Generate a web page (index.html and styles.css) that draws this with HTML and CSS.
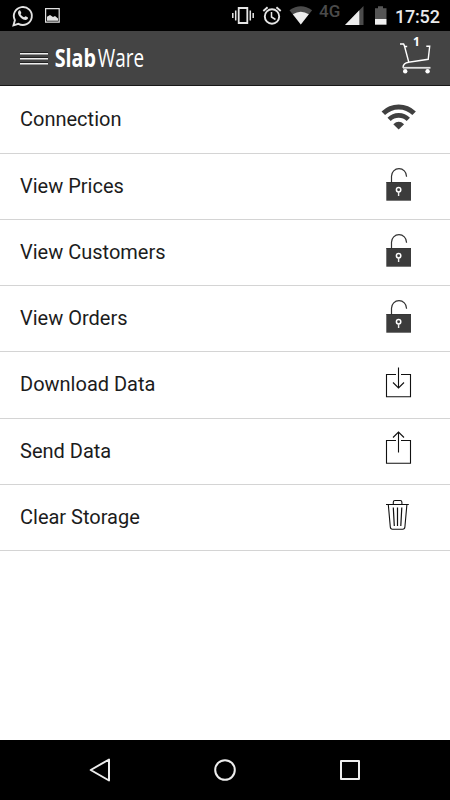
FILE: index.html
```html
<!DOCTYPE html>
<html lang="en">
<head>
<meta charset="utf-8">
<title>SlabWare</title>
<link rel="stylesheet" href="styles.css">
</head>
<body>
<div class="status">
  <svg class="status-left" width="80" height="31" viewBox="0 0 80 31" fill="none" stroke="#e2e2e2">
    <path d="M13.500 25.300l1.400-5.100A9 9 0 1 1 18.400 23.800z" stroke-width="1.900"/>
    <path d="M18.800 10.800c.7-.8 1.400-.6 1.700.1l.8 1.800c.2.6-.7 1.200-.7 1.600.7 1.400 2 2.500 3.500 3 .5 0 1-1.200 1.600-1l1.900 1c.9.5.2 1.800-.6 2.300-1.500.8-4 .1-6.200-1.900-2.400-2.200-3.700-5-2-6.900z" fill="#e2e2e2" stroke="none"/>
    <path d="M45.600 8.600h13.600v13.600H45.600z" stroke-width="1.200"/>
    <path d="M47 20.700v-4l3-1.800 3 2.200 2-1 3 2.300v2.300z" fill="#e2e2e2" stroke="none"/>
  </svg>
  <div class="status-right">
    <svg width="167" height="31" viewBox="228 0 167 31" fill="none" stroke="#e5e5e5">
      <path d="M238.700 8h8.600v15h-8.600z" stroke-width="1.800"/>
      <path d="M235.700 10.500v10M232.800 13v5M250.300 10.500v10M253.200 13v5" stroke-width="1.500"/>
      <circle cx="272" cy="16.500" r="7.200" stroke-width="1.900"/>
      <path d="M271.500 12v5l4 2.500" stroke-width="1.500"/>
      <path d="M263.300 11l4.300-3.700M280.700 11l-4.300-3.700" stroke-width="1.900"/>
      <path d="M289.500 10.300q11.300-8 22.600 0L300.800 24.500z" fill="#4b4b4b" stroke="none"/>
      <path d="M292.800 14.300q8-5.200 16 0L300.800 24.500z" fill="#ededed" stroke="none"/>
      <text class="network" x="319" y="17.200">4G</text>
      <path d="M363.500 6v19H345z" fill="#4b4b4b" stroke="none"/>
      <path d="M359.300 10.300V25H345z" fill="#ededed" stroke="none"/>
      <path d="M375 8.200h3V6.300h5v1.900h3.500V19H375z" fill="#555" stroke="none"/>
      <path d="M375 19h11.500v5.700H375z" fill="#f0f0f0" stroke="none"/>
    </svg>
    <span class="clock">17:52</span>
  </div>
</div>
<header class="header">
  <div class="brand">
    <span class="menu"><i></i><i></i><i></i></span>
    <svg width="96" height="54" viewBox="54 31 96 54" fill="#fff">
      <text class="logo-bold" transform="translate(54.700 67.300) scale(.79 1)">Slab</text>
      <text class="logo-light" transform="translate(97.800 67.300) scale(.755 1)">Ware</text>
    </svg>
  </div>
  <svg width="40" height="54" viewBox="395 31 40 54" fill="none" stroke="#fff" stroke-width="1.400">
    <path d="M400 44h3.600l1 2.500h2.600M404.200 45l4.600 17.300 19.400-3 1.500-13h-3.400M408.800 62.300c-4 .5-5.800 2.200-5.800 5.500"/>
    <path d="M403 67.800h27.500" stroke="#e0e0e0" stroke-width="1.800"/>
    <circle cx="405.200" cy="71.300" r="2.200" fill="#fff" stroke="none"/>
    <circle cx="427.600" cy="71.300" r="2.200" fill="#fff" stroke="none"/>
    <text class="count" x="413" y="46.300">1</text>
  </svg>
</header>
<main class="list">
  <div class="row"><span>Connection</span>
    <svg class="icon" viewBox="370 87 60 66" fill="none" stroke="#404040">
      <path d="M383.300 113.300a22 22 0 0 1 30.800 0" stroke-width="5"/>
      <path d="M389.100 119.400a13.500 13.500 0 0 1 19.200 0" stroke-width="4.600"/>
      <path d="M393.300 124.200q5.400-4.700 10.800 0l-5.400 5.400z" fill="#404040" stroke="none"/>
    </svg></div>
  <div class="row"><span>View Prices</span>
    <svg class="icon" viewBox="370 153 60 66" fill="none"><use href="#lock"/></svg></div>
  <div class="row"><span>View Customers</span>
    <svg class="icon" viewBox="370 153 60 66" fill="none"><use href="#lock"/></svg></div>
  <div class="row"><span>View Orders</span>
    <svg class="icon" viewBox="370 153 60 66" fill="none">
      <g id="lock">
        <path d="M391.500 181.500v-6.300a7.500 7.500 0 0 1 15 0v.6" stroke="#333" stroke-width="1.200"/>
        <path d="M386.300 181.200h24.700v18.500h-24.700z" fill="#3c3c3c"/>
        <path d="M386.300 181.500h24.700" stroke="#222" stroke-width=".7"/>
        <circle cx="398.600" cy="188.800" r="2.200" stroke="#fff" stroke-width="1.500"/>
        <path d="M398.600 190.500v4.500" stroke="#eee" stroke-width="1.400"/>
      </g>
    </svg></div>
  <div class="row"><span>Download Data</span>
    <svg class="icon" viewBox="370 352 60 66" fill="none" stroke="#111" stroke-width="1.100">
      <path d="M396 374.500h-9.500v22.200h24v-22.200H401"/>
      <path d="M398.500 367.500v20.500M393 382.500l5.500 5.500 5.500-5.500"/>
    </svg></div>
  <div class="row"><span>Send Data</span>
    <svg class="icon" viewBox="370 419 60 66" fill="none" stroke="#111" stroke-width="1.100">
      <path d="M396 440.500h-9.500v22.700h24v-22.700H401"/>
      <path d="M398.500 452.500v-20.500M393 437.500l5.500-5.500 5.500 5.500"/>
    </svg></div>
  <div class="row"><span>Clear Storage</span>
    <svg class="icon" viewBox="370 485 60 66" fill="none" stroke="#111" stroke-width="1.100">
      <path d="M386 504.500h22.800M393.300 504.500v-2.300q0-1.700 1.700-1.700h5.200q1.700 0 1.700 1.700v2.300M388.300 504.500l2 22.500q.2 2.200 2.200 2.200h10.200q2 0 2.200-2.200l2-22.500"/>
      <path d="M393.300 507.500l1 18.500M397.500 507.500v18.500M401.800 507.500l-1 18.500" stroke-width="1.200"/>
    </svg></div>
</main>
<nav class="nav">
  <svg width="450" height="60" viewBox="0 740 450 60" fill="none" stroke="#ededed" stroke-width="2" stroke-linejoin="round">
    <path d="M109 759.500v21L90.700 770z"/>
    <circle cx="225" cy="770" r="9.800"/>
    <path d="M341 761h18v18h-18z"/>
  </svg>
</nav>
</body>
</html>
```
FILE: styles.css
```css
body {
  margin: 0;
  height: 800px;
  display: flex;
  flex-direction: column;
  overflow: hidden;
  background: #fff;
  font-family: Roboto, "Liberation Sans", sans-serif;
}
svg { display: block; flex: none; }
.status {
  flex: none;
  height: 31px;
  display: flex;
  justify-content: space-between;
  background: #000;
}
.status-right { display: flex; width: 222px; }
.clock {
  color: #eaeaea;
  font-size: 18px;
  font-weight: 500;
  line-height: 33px;
  letter-spacing: -0.2px;
  white-space: nowrap;
}
.network {
  font-size: 17px;
  font-weight: 500;
  fill: #4b4b4b;
  stroke: none;
}
.header {
  flex: none;
  box-sizing: border-box;
  height: 55px;
  padding: 0 15px 0 20px;
  display: flex;
  justify-content: space-between;
  background: #444;
  border-bottom: 1px solid #181818;
}
.brand { display: flex; }
.menu {
  width: 28px;
  margin-right: 6px;
  padding-top: 21px;
  display: flex;
  flex-direction: column;
  gap: 2px;
}
.menu i {
  height: 1px;
  background: #eee;
  border-top: 1px solid #222;
  border-bottom: 1px solid #999;
}
.logo-bold, .logo-light {
  font-family: "Open Sans", sans-serif;
  font-size: 25px;
}
.logo-bold { font-weight: 700; }
.logo-light { font-weight: 400; }
.count {
  font-family: "Open Sans", sans-serif;
  font-size: 12px;
  font-weight: 700;
  fill: #fff;
  stroke: none;
}
.list { flex: 1; padding-top: 1.300px; }
.row {
  box-sizing: border-box;
  height: 66.280px;
  padding: 0 20px;
  display: flex;
  align-items: flex-start;
  justify-content: space-between;
  border-bottom: 1px solid #d4d4d4;
  color: #1c1c1c;
  font-size: 20px;
  line-height: 65.500px;
}
.icon { width: 60px; height: 66px; }
.nav { flex: none; height: 60px; background: #000; }
```
